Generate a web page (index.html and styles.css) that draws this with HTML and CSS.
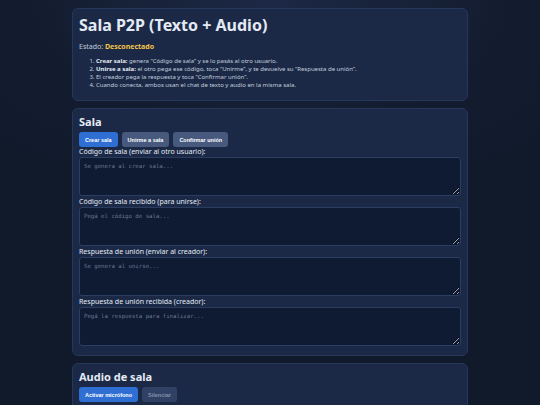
FILE: index.html
```html
<!DOCTYPE html>
<html lang="es">
<head>
  <meta charset="UTF-8" />
  <title>Sala P2P (Texto + Audio)</title>
  <meta name="viewport" content="width=device-width, initial-scale=1.0" />
  <link rel="stylesheet" href="styles.css">
</head>
<body>
  <main class="wrap">
    <section class="card intro">
      <h1>Sala P2P (Texto + Audio)</h1>
      <p class="status">Estado: <strong>Desconectado</strong></p>
      <ol class="steps">
        <li><b>Crear sala:</b> genera “Código de sala” y se lo pasás al otro usuario.</li>
        <li><b>Unirse a sala:</b> el otro pega ese código, toca “Unirme”, y te devuelve su “Respuesta de unión”.</li>
        <li>El creador pega la respuesta y toca “Confirmar unión”.</li>
        <li>Cuando conecta, ambos usan el chat de texto y audio en la misma sala.</li>
      </ol>
    </section>

    <section class="card">
      <h2>Sala</h2>
      <div class="actions">
        <button class="btn primary">Crear sala</button>
        <button class="btn">Unirme a sala</button>
        <button class="btn">Confirmar unión</button>
      </div>
      <label class="field-label">Código de sala (enviar al otro usuario):</label>
      <textarea class="field" placeholder="Se genera al crear sala..." readonly></textarea>
      <label class="field-label">Código de sala recibido (para unirse):</label>
      <textarea class="field" placeholder="Pegá el código de sala..."></textarea>
      <label class="field-label">Respuesta de unión (enviar al creador):</label>
      <textarea class="field" placeholder="Se genera al unirse..." readonly></textarea>
      <label class="field-label">Respuesta de unión recibida (creador):</label>
      <textarea class="field" placeholder="Pegá la respuesta para finalizar..."></textarea>
    </section>

    <section class="card">
      <h2>Audio de sala</h2>
      <div class="actions">
        <button class="btn primary">Activar micrófono</button>
        <button class="btn" disabled>Silenciar</button>
      </div>
      <div class="audio-bar"></div>
    </section>
  </main>
</body>
</html>
```

FILE: styles.css
```css
:root {
  --bg: #111a2b;
  --card: #1b2946;
  --card-border: #25375a;
  --text: #e4ebf5;
  --muted: #c3cddd;
  --field-bg: #0f1a33;
  --field-border: #2b3d60;
  --blue: #2f6fd3;
  --slate: #475a7d;
  --yellow: #f4c54a;
}
html {
  background: var(--bg);
}
body {
  margin: 0;
  min-height: 100vh;
  font-family: "Noto Sans", "Open Sans", sans-serif;
  color: var(--text);
  background: radial-gradient(ellipse 70% 45% at 50% 0%, #1c2845 0%, #141d30 60%, #111a2b 100%);
}
.wrap {
  width: 396px;
  margin: 0 auto;
  padding: 8px 0;
  display: flex;
  flex-direction: column;
  gap: 7px;
}
.card {
  background: var(--card);
  border: 1px solid var(--card-border);
  border-radius: 6px;
  padding: 5px 6px 8px;
}
.card.intro {
  padding-bottom: 11px;
}
h1 {
  font-size: 16px;
  line-height: 22px;
  margin: 0 0 6px;
  font-weight: 700;
}
h2 {
  font-size: 11px;
  line-height: 16px;
  margin: 0 0 2px;
  font-weight: 700;
}
.status {
  font-size: 7px;
  line-height: 10px;
  margin: 0 0 5px;
  color: var(--muted);
}
.status strong {
  color: var(--yellow);
}
.steps {
  margin: 0;
  padding-left: 17px;
  font-size: 6px;
  line-height: 8px;
  color: var(--muted);
}
.steps b {
  color: var(--text);
}
.actions {
  display: flex;
  gap: 4px;
}
.btn {
  font-family: "Liberation Sans", Arial, sans-serif;
  font-weight: 700;
  font-size: 5.5px;
  color: #fff;
  background: var(--slate);
  border: none;
  border-radius: 3px;
  height: 15px;
  padding: 0 6px;
}
.btn.primary {
  background: var(--blue);
}
.btn:disabled {
  background: #2f4265;
  color: #8391aa;
}
.field-label {
  display: block;
  font-size: 7px;
  line-height: 10px;
}
.field {
  display: block;
  box-sizing: border-box;
  width: 100%;
  height: 39px;
  margin: 0 0 1px;
  background: var(--field-bg);
  border: 1px solid var(--field-border);
  border-radius: 3px;
  color: var(--text);
  font-family: "DejaVu Sans Mono", monospace;
  font-size: 5.7px;
  padding: 5px 4px;
  resize: vertical;
}
.field::placeholder {
  color: #6b7890;
}
.audio-bar {
  margin: 4px 0 0 4px;
  width: 119px;
  height: 20px;
  border-radius: 10px;
  background: #2a3345;
}
```
